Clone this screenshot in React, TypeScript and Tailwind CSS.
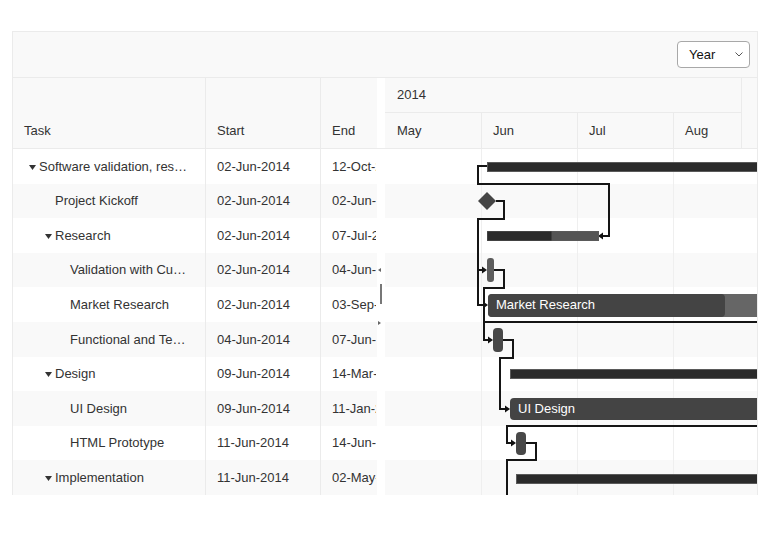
import React from "react";

type Row = {
  name: string;
  level: number;
  parent?: boolean;
  start: string;
  end: string;
};

const rows: Row[] = [
  { name: "Software validation, res…", level: 0, parent: true, start: "02-Jun-2014", end: "12-Oct-2014" },
  { name: "Project Kickoff", level: 1, start: "02-Jun-2014", end: "02-Jun-2014" },
  { name: "Research", level: 1, parent: true, start: "02-Jun-2014", end: "07-Jul-2014" },
  { name: "Validation with Cu…", level: 2, start: "02-Jun-2014", end: "04-Jun-2014" },
  { name: "Market Research", level: 2, start: "02-Jun-2014", end: "03-Sep-2014" },
  { name: "Functional and Te…", level: 2, start: "04-Jun-2014", end: "07-Jun-2014" },
  { name: "Design", level: 1, parent: true, start: "09-Jun-2014", end: "14-Mar-2015" },
  { name: "UI Design", level: 2, start: "09-Jun-2014", end: "11-Jan-2015" },
  { name: "HTML Prototype", level: 2, start: "11-Jun-2014", end: "14-Jun-2014" },
  { name: "Implementation", level: 1, parent: true, start: "11-Jun-2014", end: "02-May-2015" },
];

const indentClass = ["pl-[15px]", "pl-[31px]", "pl-[46px]"];

function Caret() {
  return (
    <svg width="7" height="5" viewBox="0 0 7 5" className="absolute left-[-10px] top-[6px]">
      <path d="M0 0 H7 L3.5 5 Z" fill="#333" />
    </svg>
  );
}

function Arrow({ x, y, dir }: { x: number; y: number; dir: "l" | "r" }) {
  const d =
    dir === "r"
      ? `M${x} ${y} L${x - 5} ${y - 3.5} L${x - 5} ${y + 3.5} Z`
      : `M${x} ${y} L${x + 5} ${y - 3.5} L${x + 5} ${y + 3.5} Z`;
  return <path d={d} fill="#111" />;
}

function Chart() {
  const line = { fill: "none", stroke: "#151515", strokeWidth: 2 } as const;
  return (
    <svg width="372" height="346" className="absolute left-0 top-0" style={{ fontFamily: '"Liberation Sans", Arial, sans-serif' }}>
      {/* dependency lines */}
      <path d="M102 17 H93 V35 H224 V87 H218" {...line} />
      <Arrow x={213} y={87} dir="l" />
      <path d="M111 52 H119 V70 H93 V121 H98" {...line} />
      <Arrow x={102} y={121} dir="r" />
      <path d="M93 120 V156 H99" {...line} />
      <Arrow x={103} y={156} dir="r" />
      <path d="M109 121 H119 V139 H99 V191 H103" {...line} />
      <Arrow x={108} y={191} dir="r" />
      <path d="M372 173 H99" {...line} />
      <path d="M118 191 H128 V209 H115 V260 H120" {...line} />
      <Arrow x={125} y={260} dir="r" />
      <path d="M372 277 H122 V294 H126" {...line} />
      <Arrow x={131} y={294} dir="r" />
      <path d="M141 294 H151 V311 H122 V346" {...line} />

      {/* row 1 summary */}
      <rect x="102.5" y="13.5" width="290" height="9" fill="#2b2b2b" stroke="#5a5a5a" strokeWidth="1" />
      {/* row 2 milestone */}
      <path d="M102 43 L111 52 L102 61 L93 52 Z" fill="#454545" />
      {/* row 3 research summary */}
      <rect x="102.5" y="82.5" width="111" height="9" fill="#555" stroke="#5a5a5a" strokeWidth="1" />
      <rect x="102.5" y="82.5" width="64" height="9" fill="#2b2b2b" />
      {/* row 4 validation */}
      <rect x="102" y="109" width="7" height="24" rx="3" fill="#5c5c5c" />
      {/* row 5 market research */}
      <rect x="103" y="145" width="300" height="23" rx="4" fill="#666" />
      <rect x="103" y="145" width="237" height="23" rx="4" fill="#444" />
      <text x="111" y="160" fill="#fff" fontSize="13">Market Research</text>
      {/* row 6 functional */}
      <rect x="108" y="179" width="10" height="24" rx="4" fill="#484848" />
      {/* row 7 design summary */}
      <rect x="125.5" y="220.5" width="260" height="9" fill="#2b2b2b" stroke="#5a5a5a" strokeWidth="1" />
      {/* row 8 UI design */}
      <rect x="125" y="249" width="260" height="22" rx="4" fill="#444" />
      <text x="133" y="264" fill="#fff" fontSize="13">UI Design</text>
      {/* row 9 html prototype */}
      <rect x="131" y="283" width="10" height="23" rx="4" fill="#484848" />
      {/* row 10 implementation summary */}
      <rect x="131.5" y="325.5" width="260" height="9" fill="#2b2b2b" stroke="#5a5a5a" strokeWidth="1" />
    </svg>
  );
}

export default function App() {
  return (
    <div className="min-h-[553px] w-[770px] bg-white pl-[12px] pt-[31px] text-[13px] text-[#333]" style={{ fontFamily: '"Liberation Sans", Arial, sans-serif' }}>
      <div className="flex h-[464px] w-[746px] flex-col overflow-hidden border border-b-0 border-[#ebebeb]">
        {/* toolbar */}
        <div className="flex h-[46px] shrink-0 items-start justify-end border-b border-[#ebebeb] bg-[#f9f9f9] pr-[7px] pt-[9px]">
          <div className="flex h-[27px] w-[73px] items-center justify-between rounded-[4px] border border-[#a8a8a8] bg-white pl-[11px] pr-[6px] text-[13px] text-[#111]">
            <span>Year</span>
            <svg width="8" height="5" viewBox="0 0 8 5">
              <path d="M0.5 0.5 L4 4 L7.5 0.5" fill="none" stroke="#555" strokeWidth="1" />
            </svg>
          </div>
        </div>

        <div className="flex flex-1">
          {/* grid */}
          <div className="flex w-[364px] shrink-0 flex-col">
            <div className="flex h-[71px] shrink-0 border-b border-[#ebebeb] bg-[#f9f9f9]">
              <div className="flex w-[193px] items-end border-r border-[#ebebeb] px-[11px] pb-[8px]">Task</div>
              <div className="flex w-[115px] items-end border-r border-[#ebebeb] px-[11px] pb-[8px]">Start</div>
              <div className="flex w-[56px] items-end px-[11px] pb-[8px]">End</div>
            </div>
            {rows.map((r, i) => (
              <div key={i} className={`flex h-[34.6px] shrink-0 items-center ${i % 2 === 1 ? "bg-[#f9f9f9]" : "bg-white"}`}>
                <div className="flex h-full w-[193px] items-center overflow-hidden whitespace-nowrap border-r border-[#ebebeb] pl-[11px]">
                  <span className={`relative ${indentClass[r.level]}`}>
                    <span className="relative">
                      {r.parent && <Caret />}
                      {r.name}
                    </span>
                  </span>
                </div>
                <div className="flex h-full w-[115px] items-center whitespace-nowrap border-r border-[#ebebeb] px-[11px]">{r.start}</div>
                <div className="flex h-full w-[55px] items-center overflow-hidden whitespace-nowrap pl-[11px]">{r.end}</div>
              </div>
            ))}
          </div>

          {/* splitter */}
          <div className="flex w-[8px] shrink-0 flex-col">
            <div className="h-[71px] shrink-0 border-b border-[#ebebeb] bg-white" />
            <div className="relative flex-1 bg-white">
              <svg width="8" height="346" className="absolute left-0 top-0">
                <path d="M1 121 L4 119 L4 123 Z" fill="#666" />
                <rect x="3" y="135" width="2" height="20" fill="#777" />
                <path d="M4 174 L1 172 L1 176 Z" fill="#666" />
              </svg>
            </div>
          </div>

          {/* timeline */}
          <div className="flex w-[372px] shrink-0 flex-col">
            <div className="flex h-[71px] shrink-0 border-b border-[#ebebeb] bg-[#f9f9f9]">
              <div className="flex w-[357px] flex-col border-r border-[#ebebeb]">
                <div className="flex h-[35px] items-center border-b border-[#ebebeb] pl-[12px]">2014</div>
                <div className="flex flex-1">
                  <div className="flex w-[97px] items-center border-r border-[#ebebeb] pl-[12px]">May</div>
                  <div className="flex w-[96px] items-center border-r border-[#ebebeb] pl-[11px]">Jun</div>
                  <div className="flex w-[96px] items-center border-r border-[#ebebeb] pl-[11px]">Jul</div>
                  <div className="flex flex-1 items-center pl-[11px]">Aug</div>
                </div>
              </div>
            </div>
            <div className="relative flex-1">
              <div className="flex flex-col">
                {rows.map((_, i) => (
                  <div key={i} className={`flex h-[34.6px] ${i % 2 === 1 ? "bg-[#f9f9f9]" : "bg-white"}`}>
                    <div className="w-[97px] border-r border-[#efefef]" />
                    <div className="w-[96px] border-r border-[#efefef]" />
                    <div className="w-[96px] border-r border-[#efefef]" />
                    <div className="flex-1" />
                  </div>
                ))}
              </div>
              <Chart />
            </div>
          </div>
        </div>
      </div>
    </div>
  );
}
